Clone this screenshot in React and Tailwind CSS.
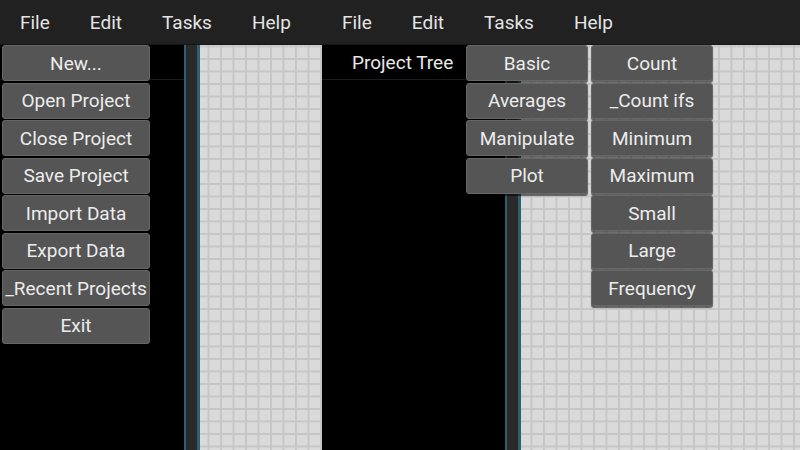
import React from "react";

const fileItems = [
  "New...",
  "Open Project",
  "Close Project",
  "Save Project",
  "Import Data",
  "Export Data",
  "_Recent Projects",
  "Exit",
];

const taskItems = ["Basic", "Averages", "Manipulate", "Plot"];
const basicItems = ["Count", "_Count ifs", "Minimum", "Maximum", "Small", "Large", "Frequency"];

function MenuBar() {
  return (
    <div className="h-[45px] bg-[#212121] border-b border-[#161616] flex items-center text-[19px] text-[#e4e4e4]">
      {["File", "Edit", "Tasks", "Help"].map((m) => (
        <div key={m} className="px-5 pt-[2px]">
          {m}
        </div>
      ))}
    </div>
  );
}

function MenuButton({ label, width }) {
  return (
    <div
      className={`${width} h-[36px] pt-[2px] bg-[#555555] border border-[#676767] rounded-[3px] shadow-[0_2px_1px_rgba(0,0,0,0.55)] flex items-center justify-center text-[19px] text-[#ececec] whitespace-nowrap`}
    >
      {label}
    </div>
  );
}

function Splitter() {
  return (
    <div className="w-[16px] shrink-0 bg-[#2a2a2a] border-l-2 border-r-[3px] border-l-[#2b6070] border-r-[#2b6070]" />
  );
}

function Panel({ width, title }) {
  return (
    <div className={`${width} shrink-0 bg-black flex flex-col`}>
      <div className="h-[35px] pt-[2px] border-b border-[#1c1c1c] flex items-center pl-[30px] text-[19px] text-[#e8e8e8]">
        {title}
      </div>
    </div>
  );
}

export default function App() {
  return (
    <div
      className="w-[800px] h-[450px] flex overflow-hidden bg-black"
      style={{ fontFamily: "Roboto, 'Noto Sans', sans-serif" }}
    >
      {/* left window: File menu open */}
      <div className="relative w-[322px] shrink-0 flex flex-col">
        <MenuBar />
        <div className="flex-1 flex">
          <Panel width="w-[184px]" title="" />
          <Splitter />
          <div className="flex-1 bg-[#dadada] bg-[linear-gradient(to_right,#c6c6c6_2px,transparent_2px),linear-gradient(to_bottom,#c6c6c6_2px,transparent_2px)] bg-[size:12.5px_12.5px] bg-[position:7.5px_0.5px]" />
        </div>
        <div className="absolute left-[2px] top-[45px] flex flex-col gap-[1.5px]">
          {fileItems.map((it) => (
            <MenuButton key={it} label={it} width="w-[148px]" />
          ))}
        </div>
      </div>

      {/* right window: Tasks > Basic open */}
      <div className="relative flex-1 flex flex-col">
        <MenuBar />
        <div className="flex-1 flex">
          <Panel width="w-[183px]" title="Project Tree" />
          <Splitter />
          <div className="flex-1 bg-[#dadada] bg-[linear-gradient(to_right,#c6c6c6_2px,transparent_2px),linear-gradient(to_bottom,#c6c6c6_2px,transparent_2px)] bg-[size:12.5px_12.5px] bg-[position:9.5px_0.5px]" />
        </div>
        <div className="absolute left-[144px] top-[45px] flex gap-[3px]">
          <div className="flex flex-col gap-[1.5px]">
            {taskItems.map((it) => (
              <MenuButton key={it} label={it} width="w-[122px]" />
            ))}
          </div>
          <div className="flex flex-col gap-[1.5px]">
            {basicItems.map((it) => (
              <MenuButton key={it} label={it} width="w-[122px]" />
            ))}
          </div>
        </div>
      </div>
    </div>
  );
}
